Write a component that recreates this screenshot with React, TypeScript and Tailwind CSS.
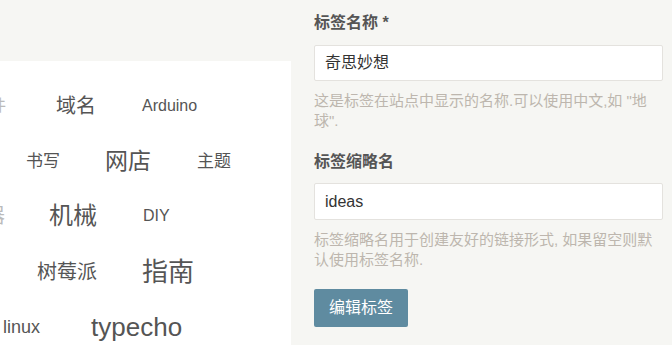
import React from "react";

const font = { fontFamily: '"Liberation Sans", "Noto Sans CJK SC", sans-serif' };

export default function App() {
  return (
    <div
      className="w-[672px] h-[345px] bg-[#f6f6f3] flex overflow-hidden font-['Liberation_Sans','Noto_Sans_CJK_SC',sans-serif]"
      style={font}
    >
      {/* Left: tag cloud panel */}
      <div className="w-[291px] shrink-0 pt-[61px] flex flex-col">
        <div className="flex-1 bg-white overflow-hidden text-[#555] flex flex-col pt-[16px] whitespace-nowrap">
          <div className="h-[58px] shrink-0 flex items-center leading-none">
            <span className="text-[16px] ml-[-10px] text-[#bbb]">件</span>
            <span className="text-[20px] ml-[50px]">域名</span>
            <span className="text-[16px] ml-[46px]">Arduino</span>
          </div>
          <div className="h-[53px] shrink-0 flex items-center leading-none">
            <span className="text-[17px] ml-[26px]">书写</span>
            <span className="text-[23px] ml-[45px]">网店</span>
            <span className="text-[17px] ml-[46px]">主题</span>
          </div>
          <div className="h-[56px] shrink-0 flex items-center leading-none">
            <span className="text-[20px] ml-[-15px] text-[#bbb]">器</span>
            <span className="text-[24px] ml-[44px]">机械</span>
            <span className="text-[16px] ml-[46px]">DIY</span>
          </div>
          <div className="h-[55px] shrink-0 flex items-center leading-none">
            <span className="text-[20px] ml-[37px]">树莓派</span>
            <span className="text-[26px] ml-[45px]">指南</span>
          </div>
          <div className="h-[56px] shrink-0 flex items-center leading-none">
            <span className="text-[18px] ml-[3px]">linux</span>
            <span className="text-[26px] ml-[51px]">typecho</span>
          </div>
        </div>
      </div>

      {/* Right: form */}
      <div className="ml-[23px] w-[349px] shrink-0 flex flex-col pt-[13px]">
        <label className="text-[16px] leading-[20px] font-bold text-[#555]">标签名称 *</label>
        <div className="mt-[12px] h-[36px] bg-white border border-[#e4e2de] rounded-[2px] px-[10px] flex items-center text-[16px] text-[#333]">
          奇思妙想
        </div>
        <p className="mt-[10px] text-[15px] leading-[20px] text-[#bdb6ae]">
          这是标签在站点中显示的名称.可以使用中文,如 "地球".
        </p>
        <label className="mt-[21px] text-[16px] leading-[20px] font-bold text-[#555]">标签缩略名</label>
        <div className="mt-[11px] h-[37px] bg-white border border-[#e4e2de] rounded-[2px] px-[10px] flex items-center text-[16px] text-[#333]">
          ideas
        </div>
        <p className="mt-[10px] text-[15px] leading-[20px] text-[#bdb6ae]">
          标签缩略名用于创建友好的链接形式, 如果留空则默认使用标签名称.
        </p>
        <div className="mt-[19px]">
          <button className="w-[94px] h-[38px] bg-[#5f8ba0] rounded-[2px] text-white text-[16px] leading-none flex items-center justify-center">
            编辑标签
          </button>
        </div>
      </div>
    </div>
  );
}
